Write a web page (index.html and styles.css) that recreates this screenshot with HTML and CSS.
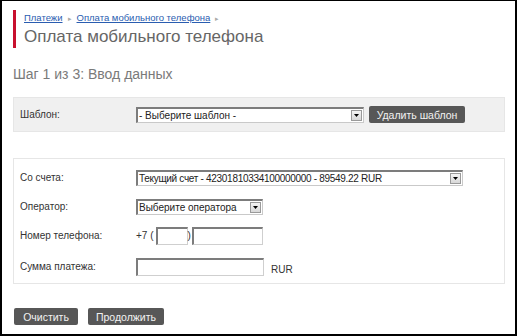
FILE: index.html
```html
<!DOCTYPE html>
<html lang="ru">
<head>
<meta charset="utf-8">
<title>Оплата мобильного телефона</title>
<link rel="stylesheet" href="styles.css">
</head>
<body>
<div class="frame">
  <div class="page-head">
    <div class="crumbs"><a href="#">Платежи</a><span class="sep">▸</span><a href="#">Оплата мобильного телефона</a><span class="sep">▸</span></div>
    <h1 class="title">Оплата мобильного телефона</h1>
  </div>
  <h2 class="step">Шаг 1 из 3: Ввод данных</h2>

  <div class="panel panel-grey">
    <div class="row">
      <span class="label">Шаблон:</span>
      <div class="select w-tpl"><span class="sel-text">- Выберите шаблон -</span><span class="arrow"><svg width="7" height="4" viewBox="0 0 7 4"><path d="M0 0h7L3.5 4z" fill="#000"/></svg></span></div>
      <button class="btn btn-del">Удалить шаблон</button>
    </div>
  </div>

  <div class="panel panel-form">
    <div class="row">
      <span class="label">Со счета:</span>
      <div class="select w-acc"><span class="sel-text tight">Текущий счет - 42301810334100000000 - 89549.22 RUR</span><span class="arrow"><svg width="7" height="4" viewBox="0 0 7 4"><path d="M0 0h7L3.5 4z" fill="#000"/></svg></span></div>
    </div>
    <div class="row">
      <span class="label">Оператор:</span>
      <div class="select w-op"><span class="sel-text">Выберите оператора</span><span class="arrow"><svg width="7" height="4" viewBox="0 0 7 4"><path d="M0 0h7L3.5 4z" fill="#000"/></svg></span></div>
    </div>
    <div class="row">
      <span class="label">Номер телефона:</span>
      <span class="txt">+7 (</span><span class="input w-code"></span><span class="txt">)</span><span class="input w-num"></span>
    </div>
    <div class="row">
      <span class="label">Сумма платежа:</span>
      <span class="input w-sum"></span><span class="txt cur">RUR</span>
    </div>
  </div>

  <div class="actions">
    <button class="btn">Очистить</button>
    <button class="btn btn-next">Продолжить</button>
  </div>
</div>
</body>
</html>
```
FILE: styles.css
```css
html, body {
  margin: 0;
  padding: 0;
  background: #fff;
}
.frame {
  box-sizing: border-box;
  width: 517px;
  height: 336px;
  border: 1px solid #000;
  border-width: 1px 2px 2px 2px;
  padding: 9px 10px 0 11px;
  font-family: "Liberation Sans", Arial, sans-serif;
  font-size: 10px;
  color: #333;
}
.page-head {
  border-left: 3px solid #c8102e;
  padding-left: 8px;
  height: 38px;
}
.crumbs {
  font-size: 9.5px;
  line-height: 14px;
  padding-top: 1px;
  color: #999;
}
.crumbs a {
  color: #2a5db0;
  text-decoration: underline;
}
.crumbs .sep {
  font-size: 7px;
  margin: 0 5px;
  color: #aaa;
}
.title {
  margin: 0;
  font-weight: normal;
  font-size: 17px;
  line-height: 22px;
  color: #666;
}
.step {
  margin: 18px 0 0 0;
  font-weight: normal;
  font-size: 14px;
  line-height: 16px;
  color: #7a7a7a;
}
.panel {
  border: 1px solid #e6e6e6;
}
.panel-grey {
  margin-top: 15px;
  background: #f0f0f0;
  height: 35px;
  box-sizing: border-box;
  padding: 8px 0 0 6px;
}
.panel-form {
  margin-top: 26px;
  height: 126px;
  box-sizing: border-box;
  padding: 10px 0 0 6px;
}
.row {
  display: flex;
  align-items: center;
  height: 17px;
}
.panel-form .row + .row {
  margin-top: 12px;
}
.panel-form .row:nth-child(3),
.panel-form .row:nth-child(4) {
  height: 19px;
}
.panel-form .row:nth-child(3) { margin-top: 11px; }
.label {
  width: 116px;
  flex: none;
}
.select {
  box-sizing: border-box;
  height: 16px;
  display: flex;
  align-items: center;
  background: #fff;
  border-style: solid;
  border-width: 2px 1px 1px 2px;
  border-color: #7c7c7c #c9c9c9 #c9c9c9 #7c7c7c;
  color: #222;
}
.sel-text {
  flex: 1;
  padding-left: 1px;
  white-space: nowrap;
  overflow: hidden;
}
.sel-text.tight { letter-spacing: -0.3px; }
.arrow {
  box-sizing: border-box;
  width: 11px;
  height: 11px;
  margin-right: 1px;
  background: linear-gradient(#f4f4f4, #d8d8d8);
  border: 1px solid #9a9a9a;
  display: flex;
  align-items: center;
  justify-content: center;
}
.arrow svg { display: block; width: 5px; height: 3px; }
.w-tpl { width: 228px; }
.w-acc { width: 327px; }
.w-op { width: 127px; }
.input {
  box-sizing: border-box;
  height: 18px;
  background: #fff;
  border-style: solid;
  border-width: 2px 1px 1px 2px;
  border-color: #7c7c7c #cfcfcf #cfcfcf #7c7c7c;
}
.w-code { width: 32px; margin-left: 2px; }
.w-num { width: 71px; margin-left: 1px; }
.w-sum { width: 128px; }
.txt { color: #333; }
.cur { margin-left: 7px; margin-top: 6px; }
.btn {
  font-family: "Liberation Sans", Arial, sans-serif;
  font-size: 10.5px;
  height: 17px;
  padding: 0;
  border: none;
  border-radius: 2px;
  background: #575757;
  color: #f2f2f2;
  white-space: nowrap;
  cursor: pointer;
}
.btn-del {
  margin-left: 5px;
  width: 96px;
}
.actions {
  margin-top: 24px;
  display: flex;
  gap: 10px;
  padding-left: 1px;
}
.actions .btn { width: 64px; }
.actions .btn-next { width: 76px; }
```
